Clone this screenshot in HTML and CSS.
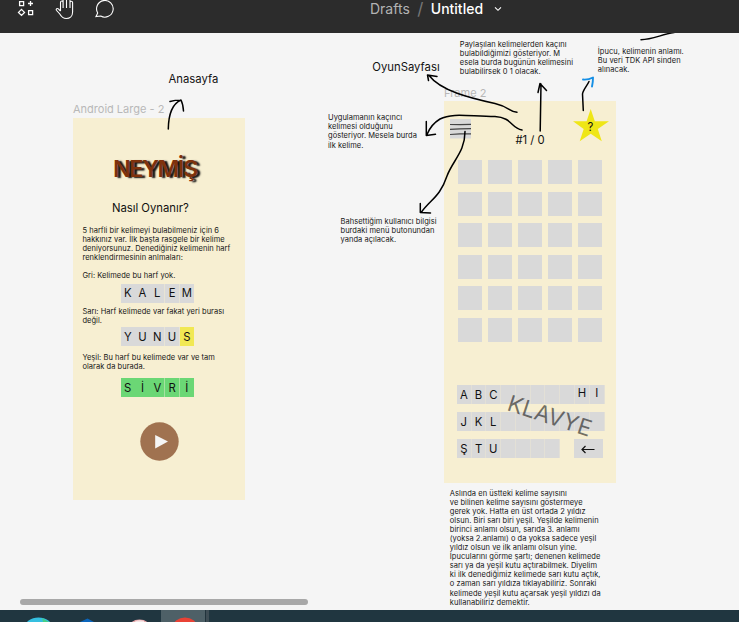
FILE: index.html
```html
<!DOCTYPE html>
<html lang="tr">
<head>
<meta charset="utf-8">
<title>Untitled</title>
<link rel="stylesheet" href="styles.css">
</head>
<body>
<header class="toolbar">
  <svg class="tools" width="130" height="33" viewBox="0 0 130 33" fill="none" stroke="#fff">
    <path stroke-width="1.3" d="M19.6 1.6h4v4h-4zM28.6 10.6h4v4h-4zM30.5 1v5M28 3.500h5M21.500 9.400l3 3-3 3-3-3z"/>
    <path stroke-width="1.1" d="M60.500 11V2.500q0-1.500 1.300-1.500t1.300 1.500V8M63.100 7V0M66.500 0v8M70 8V2.500q0-1.300 1.300-1.300t1.300 1.300V12c0 4-2.800 6.500-6.300 6.500-3.300 0-5-1.700-6.500-4.500l-3.400-3.700c-.8-1.500.8-2.400 2-1.400l2.100 2.300M70 3V0"/>
    <path stroke-width="1.1" d="M96 16.500l1.700-3.500a8.300 8.300 0 1 1 3 3z"/>
  </svg>
  <nav class="crumbs">
    <span class="folder">Drafts</span><span class="slash">/</span><span class="file">Untitled</span>
    <svg width="8" height="6" viewBox="0 0 8 6" fill="none" stroke="#fff" stroke-width="1.1"><path d="M1 1.300l3 3 3-3"/></svg>
  </nav>
</header>

<main class="canvas">
  <div class="frame-name name-home">Android Large - 2</div>
  <div class="frame-name name-game">Frame 2</div>

  <section class="frame home">
    <h1 class="logo">NEYMİŞ</h1>
    <h2 class="subtitle">Nasıl Oynanır?</h2>
    <p class="copy intro">5 harfli bir kelimeyi bulabilmeniz için 6<br>hakkınız var. İlk başta rasgele bir kelime<br>deniyorsunuz. Denediğiniz kelimenin harf<br>renklendirmesinin anlmaları:<br><br>Gri: Kelimede bu harf yok.</p>
    <div class="word"><span>K</span><span>A</span><span>L</span><span>E</span><span>M</span></div>
    <p class="copy">Sarı: Harf kelimede var fakat yeri burası<br>değil.</p>
    <div class="word second"><span>Y</span><span>U</span><span>N</span><span>U</span><span class="yellow">S</span></div>
    <p class="copy">Yeşil: Bu harf bu kelimede var ve tam<br>olarak da burada.</p>
    <div class="word green"><span>S</span><span>İ</span><span>V</span><span>R</span><span>İ</span></div>
    <svg class="play" width="39" height="39" viewBox="0 0 39 39"><circle cx="19.500" cy="19.500" r="19.200" fill="#a07250"/><path d="M15.200 13v13.500L28 19.600z" fill="#f5f5f5"/></svg>
  </section>

  <section class="frame game">
    <div class="top">
      <svg class="menu" width="21" height="20" viewBox="0 0 21 20" fill="none" stroke="#444" stroke-width="1.2"><path d="M0 0h21v19.500H0z" fill="#d9d9d9" stroke="none"/><path d="M0 5.500l10 .1 11-.3M0 10.300l10-.4 11-.3M0 15.500l10-.6h11"/></svg>
      <div class="score">#1 / 0</div>
      <svg class="star" width="36" height="34" viewBox="0 0 36 34"><path d="M17.700 0l4.100 12.300H36L24.800 20l4 12.200-11.100-7.400-11 7.400 4-12.200L0 12.300h13.600z" fill="#efe617"/><text x="14.500" y="21.500">?</text></svg>
    </div>
    <div class="board">
      <i></i><i></i><i></i><i></i><i></i><i></i><i></i><i></i><i></i><i></i>
      <i></i><i></i><i></i><i></i><i></i><i></i><i></i><i></i><i></i><i></i>
      <i></i><i></i><i></i><i></i><i></i><i></i><i></i><i></i><i></i><i></i>
    </div>
    <div class="keyboard">
      <div class="keys"><span>A</span><span>B</span><span>C</span><span></span><span></span><span></span><span></span><span></span><span class="high">H</span><span class="high">I</span></div>
      <div class="keys"><span>J</span><span>K</span><span>L</span><span></span><span></span><span></span><span></span><span></span><span></span><span></span></div>
      <div class="keys"><span>Ş</span><span>T</span><span>U</span><span></span><span></span><span></span><span></span>
        <svg class="back" width="29" height="19" viewBox="0 0 29 19" fill="none" stroke="#111" stroke-width="1.200"><path d="M20.500 10.500H8M11.500 7L8 10.500l3.500 3.500"/></svg></div>
      <div class="klavye">KLAVYE</div>
    </div>
  </section>

  <div class="label label-home">Anasayfa</div>
  <div class="label label-game">OyunSayfası</div>
  <p class="copy note note-shared">Paylaşılan kelimelerden kaçını<br>bulabildiğimizi gösteriyor. M<br>esela burda bugünün kelimesini<br>bulabilirsek 0 1 olacak.</p>
  <p class="copy note note-hint">İpucu, kelimenin anlamı.<br>Bu veri TDK API sinden<br>alınacak.</p>
  <p class="copy note note-count">Uygulamanın kaçıncı<br>kelimesi olduğunu<br>gösteriyor. Mesela burda<br>ilk kelime.</p>
  <p class="copy note note-menu">Bahsettiğim kullanıcı bilgisi<br>burdaki menü butonundan<br>yanda açılacak.</p>
  <p class="copy note note-rules">Aslında en üstteki kelime sayısını<br>ve bilinen kelime sayısını göstermeye<br>gerek yok. Hatta en üst ortada 2 yıldız<br>olsun. Biri sarı biri yeşil. Yeşilde kelimenin<br>birinci anlamı olsun, sarıda 3. anlamı<br>(yoksa 2.anlamı) o da yoksa sadece yeşil<br>yıldız olsun ve ilk anlamı olsun yine.<br>İpucularını görme şartı; denenen kelimede<br>sarı ya da yeşil kutu açtırabilmek. Diyelim<br>ki ilk denediğimiz kelimede sarı kutu açtık,<br>o zaman sarı yıldıza tıklayabiliriz. Sonraki<br>kelimede yeşil kutu açarsak yeşil yıldızı da<br>kullanabiliriz demektir.</p>

  <svg class="arrows" width="739" height="577" viewBox="0 33 739 577" fill="none" stroke="#000" stroke-width="1.500" stroke-linecap="round" stroke-linejoin="round">
    <path d="M168.300 129C168.500 115 172 104 181 100M170 101.500Q175 100 181 100Q183 104 183.500 111"/>
    <path d="M517 112.300C509 112 510 107 495 103.500C470 98 441 91 429 75.500M428.500 80.500L427.500 75L437 76.500"/>
    <path d="M522 130C511 128 512 117.500 495 116.500C470 116.500 452 112.500 440 119C435 122 430 127 427 134.500M426.300 121.500V135.500L435.500 134.300"/>
    <path d="M465 131.500C465 152 453 160 447 176C440 197 431 199 421.500 212M420.300 203.500V212.500L430.500 213"/>
    <path d="M540.200 131L541 84M538 92.500Q539 88 540 83.500L546.500 90.500"/>
    <path d="M583.300 110.500L582.500 94C583 90 587 86 589 81.500"/>
    <path d="M583 79.500Q588 80 593 77.500Q593 82 592 86.500" stroke="#158fe5" stroke-width="1.900"/>
    <path d="M641 39.700C653 39.500 661 34.500 674 32.500"/>
  </svg>
  <div class="scrollbar"></div>
</main>

<footer class="taskbar">
  <svg width="240" height="12" viewBox="0 0 240 12"><path d="M161 0h44v12h-44z" fill="#4e6067"/><path d="M205 0h4v12h-4z" fill="#3e4d55"/><path d="M205 0h1v12h-1z" fill="#21333c"/>
    <ellipse cx="38.500" cy="18" rx="14" ry="10.500" fill="#35bfe0"/><path d="M42 8l7 4h-6z" fill="#45cf87"/><path d="M80 12l7.500-3.500L94 12z" fill="#0b66bd"/><ellipse cx="139.500" cy="18" rx="11" ry="8.500" fill="#e9a9ad"/><path d="M135 11.500q4-2 9-.5v1h-9z" fill="#f6e4e4"/><ellipse cx="185" cy="17" rx="12" ry="9.500" fill="#e94235"/></svg>
</footer>
</body>
</html>
```
FILE: styles.css
```css
* { box-sizing: border-box; margin: 0; padding: 0; }
body { width: 739px; height: 622px; overflow: hidden; display: flex; flex-direction: column; background: #f5f5f5; color: #111; font-family: Inter, "Liberation Sans", sans-serif; }
.toolbar { height: 33px; flex: none; display: flex; background: #2c2c2c; }
.tools { flex: none; width: 130px; height: 33px; margin-right: 240px; }
.crumbs { display: flex; align-items: center; height: 18px; font-size: 14px; line-height: 18px; color: #fff; }
.folder { color: #b3b3b3; }
.slash { color: #777; width: 21px; text-align: center; font-size: 17px; }
.file { font-weight: 500; margin-right: 11px; }

.canvas { position: relative; height: 577px; flex: none; overflow: hidden; }
.frame { position: absolute; width: 171.500px; height: 382px; background: #f7efd2; display: flex; flex-direction: column; }
.home { left: 73.400px; top: 84.500px; }
.game { left: 444.400px; top: 68px; }
.frame-name { position: absolute; font-size: 11px; line-height: 14px; color: #b8b8b8; white-space: nowrap; }
.name-home { left: 73px; top: 69.400px; }
.name-game { left: 444px; top: 53.400px; }

.copy { font-size: 7.500px; line-height: 9.100px; letter-spacing: .045px; white-space: nowrap; color: #151515; }
.home .copy { margin-left: 9px; }
.logo { margin: 36px 0 0 39.500px; font-size: 23.500px; line-height: 29px; font-weight: 600; letter-spacing: -1.400px; color: #7f320c; text-shadow: 3px .5px 1.500px #111; }
.subtitle { margin: 18.400px 0 0 38.500px; font-size: 11.300px; line-height: 14px; font-weight: 400; }
.home .intro { margin-top: 10.800px; }
.word { display: flex; width: 73.300px; gap: .7px; margin: 3.900px 0 4.500px 47.300px; background: #e8e4d5; }
.word span { width: 14.100px; height: 18.700px; background: #d9d9d9; font-size: 11.300px; line-height: 19.200px; text-align: center; }
.word .yellow { background: #f1e853; }
.word.second { margin: 1.500px 0 7.400px 47.300px; }
.word.second span { line-height: 20px; }
.word.green { margin-top: 7px; margin-bottom: 25px; background: #a5e2a0; }
.word.green span { background: #6bd775; line-height: 20px; }
.play { margin-left: 66.300px; }

.top { height: 59px; display: flex; }
.menu { margin: 18px 0 0 5.500px; }
.score { width: 30px; margin: 32px 0 0 44.500px; font-size: 11.300px; line-height: 14px; white-space: nowrap; }
.star { margin: 8px 0 0 27.300px; }
.star text { font-size: 11.300px; fill: #111; }
.board { display: grid; grid-template-columns: repeat(5, 24.200px); grid-auto-rows: 24.200px; gap: 7.360px 5.900px; margin-left: 13.500px; }
.board i { background: #d9d9d9; }
.keyboard { position: relative; display: flex; flex-direction: column; align-items: flex-start; gap: 8.200px; margin: 43px 0 0 12.500px; }
.keys { display: flex; height: 19px; }
.keys span { width: 14.780px; height: 19px; background: #d9d9d9; border-right: 1px solid #e3e0d6; font-size: 11.300px; line-height: 20px; text-align: center; }
.keys .high { line-height: 16px; }
.back { background: #d9d9d9; margin-left: 13.900px; }
.klavye { position: absolute; left: 49px; top: 3.500px; font-size: 22.700px; line-height: 28px; color: rgba(0,0,0,.54); transform: rotate(18px); transform: rotate(18deg); transform-origin: 0 22px; }

.label { position: absolute; font-size: 11.300px; line-height: 14px; white-space: nowrap; }
.label-home { left: 168.500px; top: 39px; }
.label-game { left: 372.300px; top: 27px; }
.note { position: absolute; }
.note-shared { left: 459.800px; top: 6.500px; }
.note-hint { left: 597.800px; top: 13.600px; }
.note-count { left: 328px; top: 80.300px; }
.note-menu { left: 340.500px; top: 183.600px; }
.note-rules { left: 449.800px; top: 455.500px; }
.arrows { position: absolute; left: 0; top: 0; }
.scrollbar { position: absolute; left: 20px; top: 566px; width: 288px; height: 6px; border-radius: 3px; background: #a8a8a8; }
.taskbar { height: 12px; flex: none; background: #203640; }
.taskbar svg { display: block; }
```
